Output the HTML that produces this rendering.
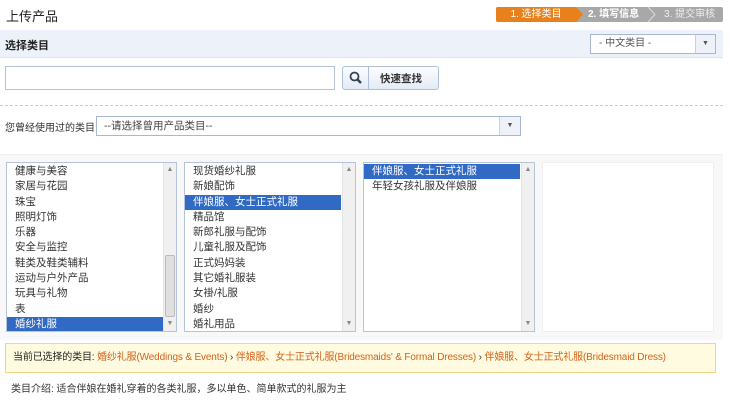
<!DOCTYPE html><html><head><meta charset="utf-8"><style>
*{box-sizing:border-box;margin:0;padding:0}
body{width:730px;height:400px;background:#fff;font-family:"Liberation Sans","Noto Sans CJK SC",sans-serif;font-size:11px;color:#333;position:relative;overflow:hidden}
.a{position:absolute}
.list{position:absolute;top:162px;height:170px;background:#fff;border:1px solid #b7c3d9;overflow:hidden;padding-top:1px}
.list p{height:15.3px;line-height:15.3px;padding-left:8px;white-space:nowrap;color:#333;font-size:10.5px}
.list p.s{background:#316ac5;color:#fff}
.sb{position:absolute;right:0;top:0;bottom:0;width:13px;background:#f0f0f0;border-left:1px solid #e4e4e4;font-size:7px;color:#888;text-align:center}
.sb i{position:absolute;left:0;width:12px;line-height:14px;font-style:normal}
</style></head><body>
<div class="a" style="left:6px;top:6px;font-size:13px;color:#222">上传产品</div>
<div class="a" style="left:496px;top:7px;width:227px;height:15px;background:#a8a8a8;border-radius:2px"></div>
<div class="a" style="left:496px;top:7px;width:80px;height:15px;background:#e8801c;border-radius:2px 0 0 2px;color:#fff;font-size:10px;line-height:15px;text-align:center">1. 选择类目</div>
<svg class="a" style="left:576px;top:7px" width="10" height="15"><polygon points="0,0 7,7.5 0,15" fill="#e8801c"/></svg>
<div class="a" style="left:588px;top:7px;line-height:15px;color:#fff;font-size:10px;font-weight:bold">2. 填写信息</div>
<svg class="a" style="left:648px;top:7px" width="10" height="15"><polyline points="0,0 7,7.5 0,15" fill="none" stroke="#ddd"/></svg>
<div class="a" style="left:664px;top:7px;line-height:15px;color:#eee;font-size:10px">3. 提交审核</div>
<div class="a" style="left:0;top:30px;width:723px;height:28px;background:#edf2fa;border-bottom:1px solid #dde5f0"></div>
<div class="a" style="left:5px;top:37px;font-weight:bold;color:#222">选择类目</div>
<div class="a" style="left:590px;top:34px;width:126px;height:20px;background:#fff;border:1px solid #a9b8d2;line-height:18px;padding-left:8px;font-size:10px;color:#555">- 中文类目 -</div>
<div class="a" style="left:695px;top:35px;width:20px;height:18px;background:#eef2f8;border-left:1px solid #c7d1e2;text-align:center;font-size:7px;line-height:18px;color:#555">▼</div>
<div class="a" style="left:5px;top:66px;width:330px;height:24px;border:1px solid #b7c3d9"></div>
<div class="a" style="left:342px;top:66px;width:97px;height:24px;border:1px solid #b0bfd8;border-radius:3px;background:linear-gradient(#fbfcfe,#e4ebf6)"></div>
<div class="a" style="left:368px;top:67px;width:1px;height:22px;background:#b0bfd8"></div>
<svg class="a" style="left:348px;top:70px" width="16" height="16"><circle cx="6.5" cy="6.5" r="4" fill="none" stroke="#345" stroke-width="1.8"/><line x1="9.5" y1="9.5" x2="13" y2="13" stroke="#345" stroke-width="2.5"/></svg>
<div class="a" style="left:380px;top:71px;font-weight:bold;color:#333;font-size:10.5px">快速查找</div>
<div class="a" style="left:0;top:105px;width:723px;border-top:1px dashed #ccc"></div>
<div class="a" style="left:5px;top:119px;color:#333;font-size:10px">您曾经使用过的类目:</div>
<div class="a" style="left:96px;top:116px;width:425px;height:20px;border:1px solid #a9b8d2;line-height:18px;padding-left:7px;color:#444;font-size:10.5px">--请选择曾用产品类目--</div>
<div class="a" style="left:499px;top:117px;width:21px;height:18px;background:#eef2f8;border-left:1px solid #c7d1e2;text-align:center;font-size:7px;line-height:18px;color:#555">▼</div>
<div class="a" style="left:0;top:154px;width:723px;height:186px;background:#f8f8f8;border-top:1px solid #eee"></div>
<div class="list" style="left:6px;width:171px"><p>健康与美容</p><p>家居与花园</p><p>珠宝</p><p>照明灯饰</p><p>乐器</p><p>安全与监控</p><p>鞋类及鞋类辅料</p><p>运动与户外产品</p><p>玩具与礼物</p><p>表</p><p class="s" style="margin-right:13px">婚纱礼服</p><div class="sb"><i style="top:0">▲</i><div style="position:absolute;top:92px;left:1px;width:10px;height:62px;background:#e0e0e0;border:1px solid #bbb;border-radius:2px"></div><i style="bottom:0">▼</i></div></div>
<div class="list" style="left:184px;width:172px"><p>现货婚纱礼服</p><p>新娘配饰</p><p class="s" style="margin-right:14px">伴娘服、女士正式礼服</p><p>精品馆</p><p>新郎礼服与配饰</p><p>儿童礼服及配饰</p><p>正式妈妈装</p><p>其它婚礼服装</p><p>女褂/礼服</p><p>婚纱</p><p>婚礼用品</p><div class="sb"><i style="top:0">▲</i><i style="bottom:0">▼</i></div></div>
<div class="list" style="left:363px;width:172px"><p class="s" style="margin-right:14px">伴娘服、女士正式礼服</p><p>年轻女孩礼服及伴娘服</p><div class="sb"><i style="top:0">▲</i><i style="bottom:0">▼</i></div></div>
<div class="a" style="left:542px;top:162px;width:172px;height:170px;background:#fff;border:1px solid #eee"></div>
<div class="a" style="left:5px;top:343px;width:711px;height:30px;background:#fffbe0;border:1px solid #f5d48a;line-height:28px;padding-left:7px;white-space:nowrap;font-size:10px;letter-spacing:-0.15px"><span style="color:#222">当前已选择的类目:</span> <span style="color:#d2621a">婚纱礼服(Weddings &amp; Events)</span> › <span style="color:#d2621a">伴娘服、女士正式礼服(Bridesmaids' &amp; Formal Dresses)</span> › <span style="color:#d2621a">伴娘服、女士正式礼服(Bridesmaid Dress)</span></div>
<div class="a" style="left:11px;top:380px;color:#333;font-size:10px">类目介绍: 适合伴娘在婚礼穿着的各类礼服，多以单色、简单款式的礼服为主</div>
</body></html>
